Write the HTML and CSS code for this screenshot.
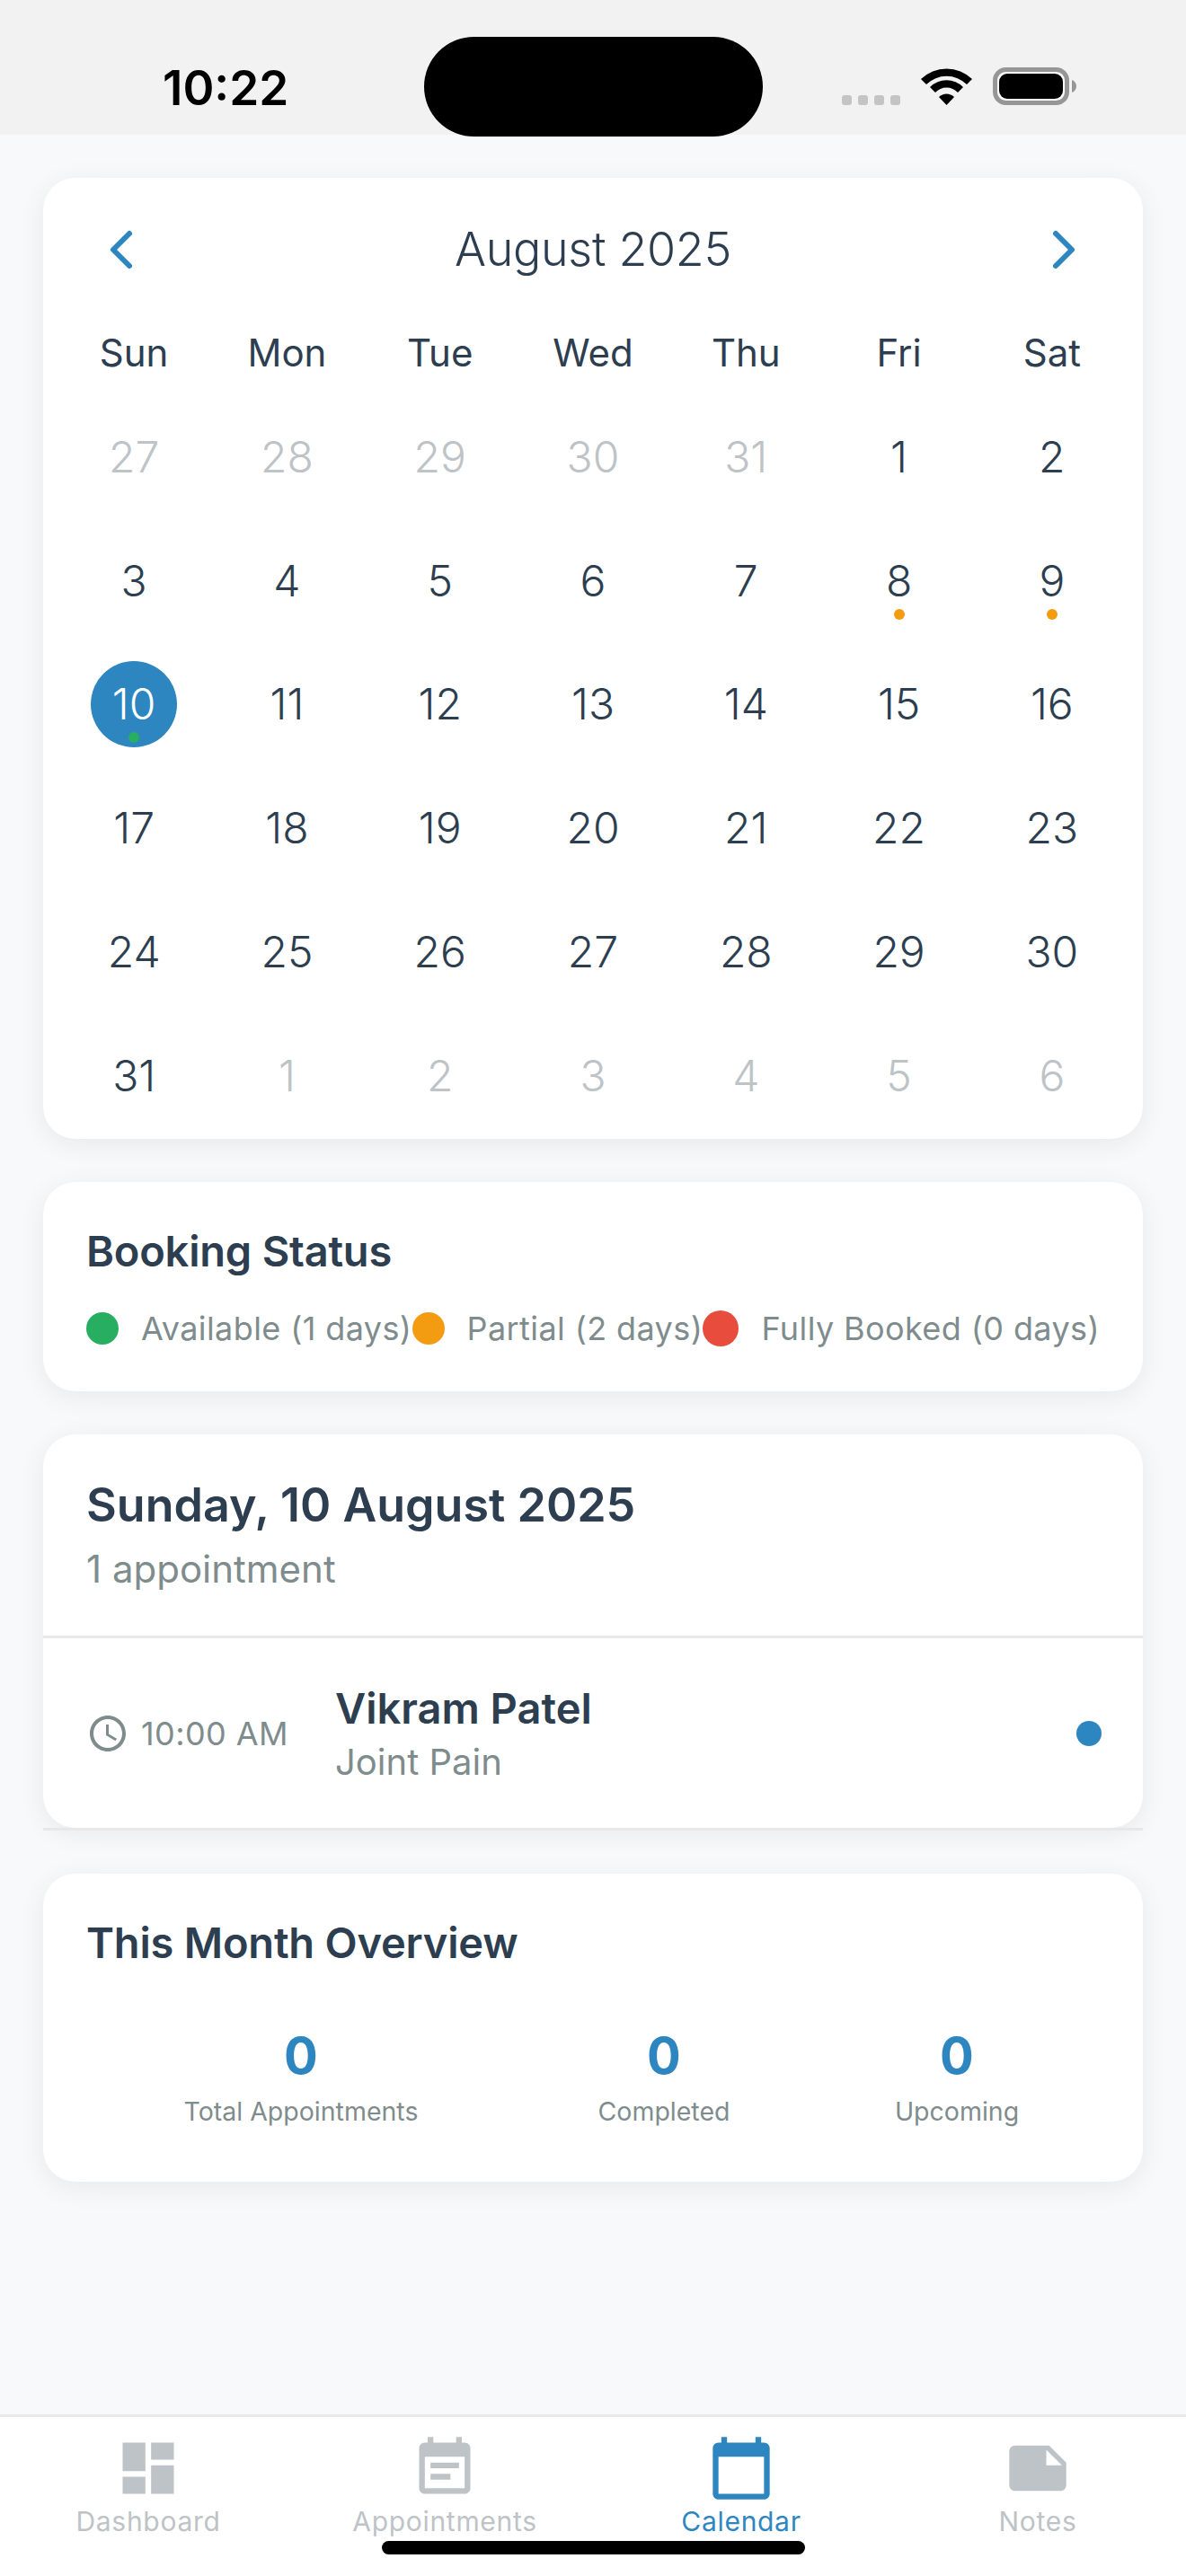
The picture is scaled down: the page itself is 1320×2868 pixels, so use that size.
FILE: index.html
```html
<!DOCTYPE html>
<html lang="en">
<head>
    <meta charset="UTF-8">
    <meta name="viewport" content="width=device-width, initial-scale=1.0">
    <title>Calendar</title>
    <link rel="stylesheet" href="styles.css">
</head>
<body>
    <div class="screen">
        <header class="status-bar">
            <span class="clock">10:22</span>
            <div class="island"></div>
            <div class="status-icons">
                <div class="signal"><i></i><i></i><i></i><i></i></div>
                <svg class="wifi" width="57" height="42" viewBox="0 0 57 42"><path d="M0 13A41 41 0 0 1 57 13L51 19A32 32 0 0 0 6 19Z"/><path d="M10 22A26 26 0 0 1 47 22L41 28A17 17 0 0 0 16 28Z"/><path d="M20 33A12 12 0 0 1 37 33L28.500 42Z"/></svg>
                <svg class="battery" width="93" height="42" viewBox="0 0 93 42"><rect x="2.500" y="2.500" width="80" height="37" rx="12" fill="#fdfdfd" stroke="#969696" stroke-width="5"/><rect x="7" y="7" width="71" height="28" rx="9"/><path d="M88 14c3 1 5 4 5 7s-2 6-5 7z" fill="#969696"/></svg>
            </div>
        </header>

        <main class="content">
            <section class="card calendar">
                <div class="month-row">
                    <svg class="chevron" viewBox="0 0 80 80"><polyline points="48,22 30,40 48,58"/></svg>
                    <h2 class="month">August 2025</h2>
                    <svg class="chevron" viewBox="0 0 80 80"><polyline points="31,22 49,40 31,58"/></svg>
                </div>
                <div class="week">
                    <span>Sun</span><span>Mon</span><span>Tue</span><span>Wed</span><span>Thu</span><span>Fri</span><span>Sat</span>
                </div>
                <div class="days">
                    <div class="day muted"><span>27</span></div>
                    <div class="day muted"><span>28</span></div>
                    <div class="day muted"><span>29</span></div>
                    <div class="day muted"><span>30</span></div>
                    <div class="day muted"><span>31</span></div>
                    <div class="day"><span>1</span></div>
                    <div class="day"><span>2</span></div>
                    <div class="day"><span>3</span></div>
                    <div class="day"><span>4</span></div>
                    <div class="day"><span>5</span></div>
                    <div class="day"><span>6</span></div>
                    <div class="day"><span>7</span></div>
                    <div class="day"><span>8</span><i class="mark orange"></i></div>
                    <div class="day"><span>9</span><i class="mark orange"></i></div>
                    <div class="day selected"><span>10</span><i class="mark green"></i></div>
                    <div class="day"><span>11</span></div>
                    <div class="day"><span>12</span></div>
                    <div class="day"><span>13</span></div>
                    <div class="day"><span>14</span></div>
                    <div class="day"><span>15</span></div>
                    <div class="day"><span>16</span></div>
                    <div class="day"><span>17</span></div>
                    <div class="day"><span>18</span></div>
                    <div class="day"><span>19</span></div>
                    <div class="day"><span>20</span></div>
                    <div class="day"><span>21</span></div>
                    <div class="day"><span>22</span></div>
                    <div class="day"><span>23</span></div>
                    <div class="day"><span>24</span></div>
                    <div class="day"><span>25</span></div>
                    <div class="day"><span>26</span></div>
                    <div class="day"><span>27</span></div>
                    <div class="day"><span>28</span></div>
                    <div class="day"><span>29</span></div>
                    <div class="day"><span>30</span></div>
                    <div class="day"><span>31</span></div>
                    <div class="day muted"><span>1</span></div>
                    <div class="day muted"><span>2</span></div>
                    <div class="day muted"><span>3</span></div>
                    <div class="day muted"><span>4</span></div>
                    <div class="day muted"><span>5</span></div>
                    <div class="day muted"><span>6</span></div>
                </div>
            </section>

            <section class="card booking">
                <h3 class="card-title">Booking Status</h3>
                <div class="legend">
                    <div class="legend-item"><i class="legend-dot green"></i>Available (1 days)</div>
                    <div class="legend-item"><i class="legend-dot orange"></i>Partial (2 days)</div>
                    <div class="legend-item"><i class="legend-dot red big"></i>Fully Booked (0 days)</div>
                </div>
            </section>

            <section class="card selected-day">
                <div class="day-head">
                    <h2 class="day-title">Sunday, 10 August 2025</h2>
                    <p class="day-count">1 appointment</p>
                </div>
                <div class="appointment">
                    <div class="appt-time">
                        <svg class="clock-icon" viewBox="0 0 24 24"><path d="M11.990 2C6.470 2 2 6.480 2 12s4.470 10 9.990 10C17.520 22 22 17.520 22 12S17.520 2 11.990 2zM12 20c-4.420 0-8-3.580-8-8s3.580-8 8-8 8 3.580 8 8-3.580 8-8 8zm.5-13H11v6l5.250 3.150.750-1.230-4.500-2.670z"/></svg>
                        <span>10:00 AM</span>
                    </div>
                    <div class="appt-info">
                        <div class="appt-name">Vikram Patel</div>
                        <div class="appt-reason">Joint Pain</div>
                    </div>
                    <i class="appt-dot"></i>
                </div>
            </section>

            <section class="card overview">
                <h3 class="card-title">This Month Overview</h3>
                <div class="stats">
                    <div class="stat"><div class="stat-value">0</div><div class="stat-label">Total Appointments</div></div>
                    <div class="stat"><div class="stat-value">0</div><div class="stat-label">Completed</div></div>
                    <div class="stat"><div class="stat-value">0</div><div class="stat-label">Upcoming</div></div>
                </div>
            </section>
        </main>

        <nav class="tab-bar">
            <div class="tab">
                <svg viewBox="0 0 24 24"><path d="M3 13h8V3H3v10zm0 8h8v-6H3v6zm10 0h8V11h-8v10zm0-18v6h8V3h-8z"/></svg>
                <span>Dashboard</span>
            </div>
            <div class="tab">
                <svg viewBox="0 0 24 24"><path d="M17 10H7v2h10v-2zm2-7h-1V1h-2v2H8V1H6v2H5c-1.110 0-1.990.9-1.990 2L3 19c0 1.100.89 2 2 2h14c1.100 0 2-.9 2-2V5c0-1.100-.9-2-2-2zm0 16H5V8h14v11zm-5-5H7v2h7v-2z"/></svg>
                <span>Appointments</span>
            </div>
            <div class="tab active">
                <svg viewBox="0 0 24 24"><path d="M20 3h-1V1h-2v2H7V1H5v2H4c-1.100 0-2 .9-2 2v16c0 1.100.9 2 2 2h16c1.100 0 2-.9 2-2V5c0-1.100-.9-2-2-2zm0 18H4V8h16v13z"/></svg>
                <span>Calendar</span>
            </div>
            <div class="tab">
                <svg viewBox="0 0 24 24"><path d="M22 10l-6-6H4c-1.100 0-2 .9-2 2v12.010c0 1.100.9 1.990 2 1.990l16-.01c1.100 0 2-.89 2-1.990v-8zm-7-4.500l5.500 5.500H15V5.500z"/></svg>
                <span>Notes</span>
            </div>
            <div class="home-indicator"></div>
        </nav>
    </div>
</body>
</html>
```

FILE: styles.css
```css
*{
    margin: 0;
    padding: 0;
    box-sizing: border-box;
}
body{
    background-color: #f8f9fa;
    font-family: Inter, "Noto Sans", Arial, sans-serif;
    color: #2c3e50;
}
i{
    display: block;
}
.screen{
    width: 1320px;
    height: 2868px;
    display: flex;
    flex-direction: column;
    overflow: hidden;
}

/* status bar */
.status-bar{
    height: 150px;
    flex-shrink: 0;
    background-color: #f2f2f2;
    position: relative;
}
.clock{
    position: absolute;
    left: 181px;
    top: 66px;
    font-size: 53px;
    line-height: 64px;
    font-weight: 600;
    color: black;
}
.island{
    position: absolute;
    left: 472px;
    top: 41px;
    width: 377px;
    height: 111px;
    border-radius: 56px;
    background-color: black;
    z-index: 2;
}
.status-icons{
    position: absolute;
    left: 937px;
    top: 75px;
    display: flex;
    align-items: flex-end;
}
.signal{
    display: flex;
    gap: 7px;
    margin-right: 23px;
}
.signal i{
    width: 11px;
    height: 11px;
    border-radius: 3px;
    background-color: #c4c4c4;
}
.wifi{
    margin-right: 23px;
}

/* cards */
.content{
    flex: 1;
    padding: 48px 48px 0;
    display: flex;
    flex-direction: column;
    gap: 48px;
}
.card{
    background-color: white;
    border-radius: 36px;
    box-shadow: 0 6px 30px rgba(0, 0, 0, 0.07);
}
.card-title{
    font-size: 47px;
    line-height: 58px;
    font-weight: 600;
    letter-spacing: -0.2px;
}

/* calendar */
.calendar{
    height: 1070px;
    padding: 40px 16px 0;
}
.month-row{
    display: flex;
    align-items: center;
    justify-content: space-between;
    padding: 0 32px;
}
.chevron{
    width: 80px;
    height: 80px;
    fill: none;
    stroke: #2e86c1;
    stroke-width: 6;
    stroke-linecap: round;
    stroke-linejoin: round;
}
.month{
    font-size: 52px;
    font-weight: 300;
    line-height: 80px;
    letter-spacing: -0.3px;
}
.week{
    display: grid;
    grid-template-columns: repeat(7, 1fr);
    margin-top: 44px;
    text-align: center;
    font-size: 42px;
    line-height: 62px;
}
.days{
    display: grid;
    grid-template-columns: repeat(7, 1fr);
    grid-auto-rows: 137.800px;
    margin-top: 16px;
}
.day{
    display: flex;
    align-items: center;
    justify-content: center;
    font-size: 48px;
    font-weight: 300;
    position: relative;
}
.day span{
    width: 96px;
    height: 96px;
    line-height: 96px;
    text-align: center;
    border-radius: 50%;
}
.day.muted{
    color: #bdc3c7;
}
.day.selected span{
    background-color: #2e86c1;
    color: white;
}
.mark{
    position: absolute;
    left: 50%;
    bottom: 26px;
    width: 12px;
    height: 12px;
    margin-left: -6px;
    border-radius: 50%;
}
.green{
    background-color: #27ae60;
}
.orange{
    background-color: #f39c12;
}
.red{
    background-color: #e74c3c;
}

/* booking status */
.booking{
    height: 233px;
    padding: 48px;
}
.legend{
    display: flex;
    justify-content: space-between;
    align-items: center;
    margin-top: 35px;
}
.legend-item{
    display: flex;
    align-items: center;
    gap: 25px;
    font-size: 36px;
    line-height: 44px;
    letter-spacing: 0.4px;
    color: #7f8c8d;
    white-space: nowrap;
}
.legend-dot{
    width: 36px;
    height: 36px;
    border-radius: 50%;
}
.legend-dot.big{
    width: 40px;
    height: 40px;
}

/* selected day */
.selected-day{
    height: 438px;
    margin-bottom: 3px;
}
.day-head{
    height: 227px;
    padding: 48px 48px 0;
    border-bottom: 3px solid #e8e8e8;
}
.day-title{
    font-size: 52px;
    line-height: 62px;
    font-weight: 600;
}
.day-count{
    font-size: 42px;
    line-height: 50px;
    margin-top: 15px;
    color: #7f8c8d;
}
.appointment{
    height: 214px;
    padding: 0 46px 0 48px;
    display: flex;
    align-items: center;
    border-bottom: 3px solid #e8e8e8;
}
.appt-time{
    width: 277px;
    display: flex;
    align-items: center;
    gap: 13px;
    font-size: 36px;
    letter-spacing: 0.4px;
    color: #7f8c8d;
}
.clock-icon{
    width: 48px;
    height: 48px;
    fill: #7f8c8d;
}
.appt-info{
    flex: 1;
}
.appt-name{
    font-size: 47px;
    line-height: 58px;
    font-weight: 600;
}
.appt-reason{
    font-size: 40px;
    line-height: 50px;
    margin-top: 6px;
    color: #7f8c8d;
}
.appt-dot{
    width: 28px;
    height: 28px;
    border-radius: 50%;
    background-color: #2e86c1;
}

/* month overview */
.overview{
    height: 343px;
    padding: 48px 48px 48px 50px;
}
.overview .card-title{
    margin-left: -2px;
}
.stats{
    display: grid;
    grid-template-columns: 474px 334px 318px;
    margin-top: 61px;
}
.stat{
    text-align: center;
}
.stat-value{
    font-size: 56px;
    line-height: 72px;
    font-weight: 700;
    color: #2e86c1;
}
.stat-label{
    font-size: 28.500px;
    line-height: 36px;
    margin-top: 8px;
    color: #7f8c8d;
}

/* bottom tabs */
.tab-bar{
    height: 180px;
    flex-shrink: 0;
    background-color: white;
    border-top: 3px solid #e8e8e8;
    display: grid;
    grid-template-columns: repeat(4, 1fr);
    position: relative;
}
.tab{
    display: flex;
    flex-direction: column;
    align-items: center;
    padding-top: 19px;
    color: #bdc3c7;
    font-size: 30px;
    font-weight: 400;
    letter-spacing: 0.7px;
}
.tab svg{
    width: 76px;
    height: 76px;
    fill: #bdc3c7;
}
.tab span{
    line-height: 36px;
    margin-top: 3px;
}
.tab.active{
    color: #2e86c1;
}
.tab.active svg{
    fill: #2e86c1;
}
.home-indicator{
    position: absolute;
    left: 425px;
    top: 138px;
    width: 471px;
    height: 15px;
    border-radius: 8px;
    background-color: black;
}
```
